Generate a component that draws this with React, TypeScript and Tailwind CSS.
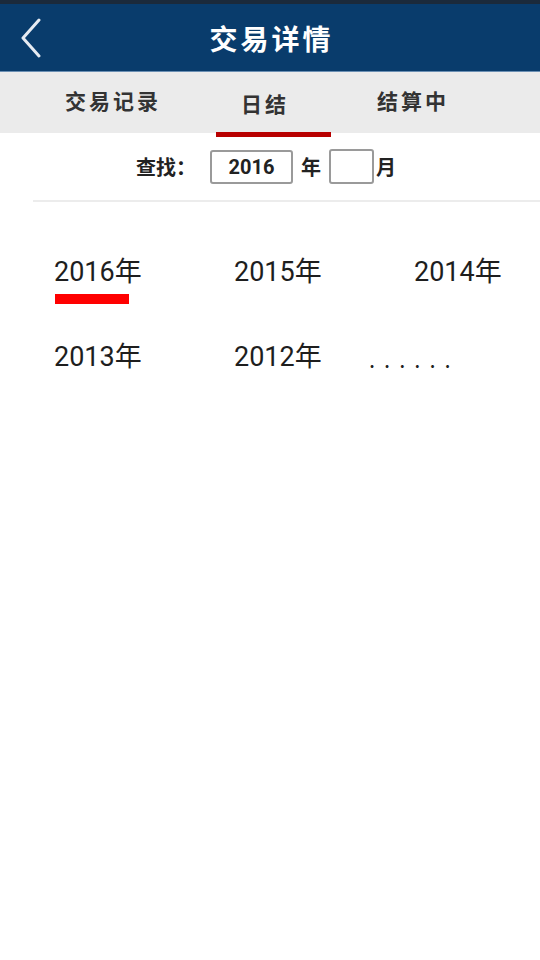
const years = ["2016年", "2015年", "2014年", "2013年", "2012年"];

function BackIcon() {
  return (
    <svg width="26" height="40" viewBox="0 0 26 40" fill="none">
      <path d="M20 2 L4 20 L20 38" stroke="#e6ebf2" strokeWidth="3" strokeLinecap="round" strokeLinejoin="round" />
    </svg>
  );
}

export default function App() {
  const font = { fontFamily: '"Noto Sans CJK SC", Roboto, sans-serif' };
  return (
    <div className="w-[540px] h-[960px] bg-white flex flex-col" style={font}>
      <div className="h-[4px] bg-[#1b2a3b]" />
      <div className="h-[68px] bg-[#093c6c] relative flex items-center justify-center border-b border-[#6b8fb3]">
        <div className="absolute left-[19px] top-[14px]">
          <BackIcon />
        </div>
        <span className="text-white text-[28px] font-bold tracking-[3px] pl-[3px]">交易详情</span>
      </div>
      <div className="h-[61px] bg-[#ebebeb] flex">
        <div className="w-[510px] flex">
          <div className="w-[216px] flex items-center justify-center pl-[10px] pb-[3px]">
            <span className="text-[21px] font-bold text-[#333] tracking-[3px]">交易记录</span>
          </div>
          <div className="w-[115px] flex flex-col items-center justify-end">
            <span className="text-[21px] font-bold text-[#333] tracking-[3px] mb-[13px] mr-[17px]">日结</span>
            <div className="w-[115px] h-[5px] bg-[#b80000] mb-[-4px] shrink-0" />
          </div>
          <div className="flex-1 flex items-center justify-center pr-[15px] pb-[3px]">
            <span className="text-[21px] font-bold text-[#333] tracking-[3px]">结算中</span>
          </div>
        </div>
      </div>
      <div className="h-[67px] flex items-center justify-center pr-[8px]">
        <span className="text-[20px] font-bold text-[#222] mr-[14px]">查找：</span>
        <div className="w-[83px] h-[34px] border-2 border-[#9a9a9a] rounded-[3px] flex items-center justify-center text-[20px] font-bold text-[#222]" style={{ fontFamily: 'Roboto, sans-serif' }}>
          2016
        </div>
        <span className="text-[20px] font-bold text-[#222] mx-[8px]">年</span>
        <div className="w-[45px] h-[35px] border-2 border-[#9a9a9a] rounded-[3px]" />
        <span className="text-[20px] font-bold text-[#222] ml-[2px]">月</span>
      </div>
      <div className="ml-[33px] h-[2px] bg-[#ececec]" />
      <div className="grid grid-cols-[180px_180px_126px] pl-[54px] pt-[52px] gap-y-[48px]">
        {years.map((y, i) => (
          <div key={y} className="h-[37px] flex flex-col">
            <span className="text-[27px] leading-[37px] text-[#1e1e1e] whitespace-nowrap" style={{ fontFamily: 'Roboto, "Noto Sans CJK SC", sans-serif' }}>{y}</span>
            {i === 0 && <div className="w-[74px] h-[10px] bg-[#ff0000] mt-[3px] ml-[1px] shrink-0" />}
          </div>
        ))}
        <div className="h-[37px] flex items-center -ml-[45px] pt-[2px]">
          <span className="text-[22px] text-[#222] tracking-[9px] whitespace-nowrap">......</span>
        </div>
      </div>
    </div>
  );
}
